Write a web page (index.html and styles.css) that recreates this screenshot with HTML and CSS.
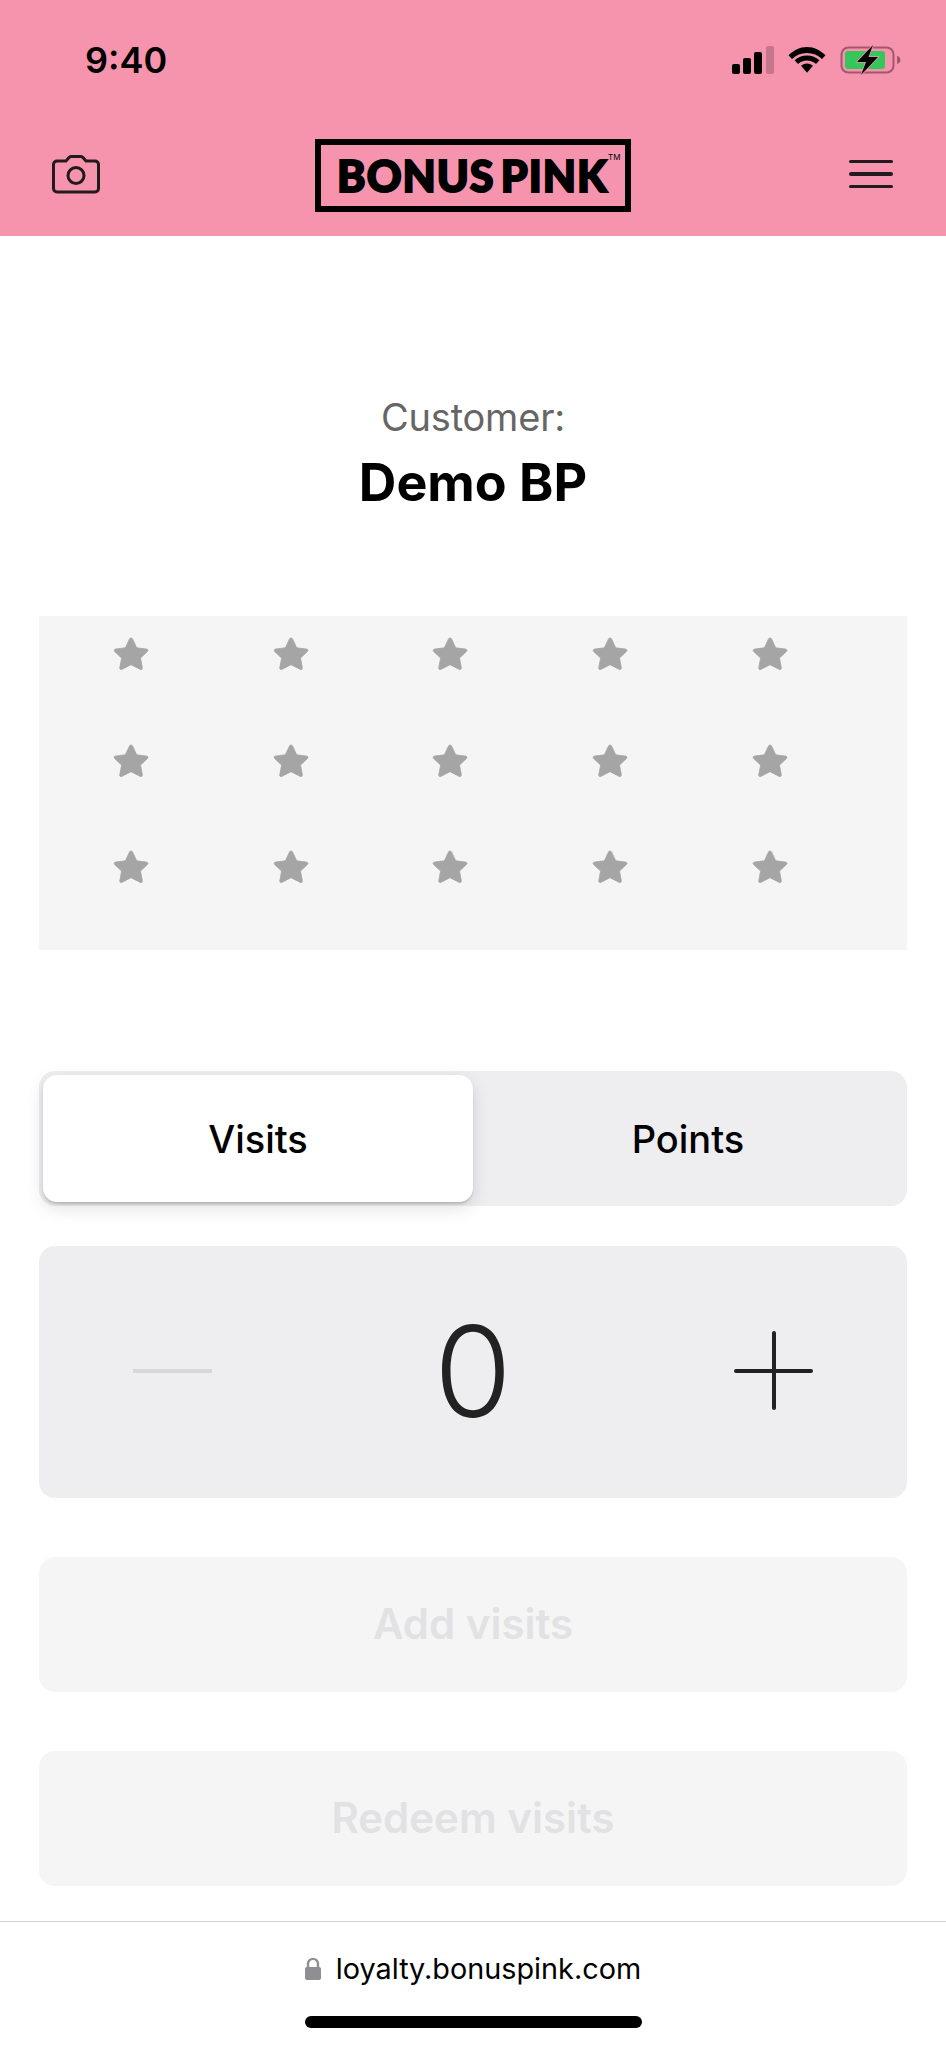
FILE: index.html
```html
<!DOCTYPE html>
<html lang="en">
<head>
    <meta charset="UTF-8">
    <meta name="viewport" content="width=device-width, initial-scale=1.0">
    <title>Bonus Pink Loyalty</title>
    <link rel="stylesheet" href="styles.css">
</head>
<body>

<svg class="sprite" width="0" height="0">
    <symbol id="star" viewBox="0 0 36 34">
        <path d="M18 1c.9 0 1.400.6 1.800 1.400l3.900 8.400 9.500 1.200c1.800.2 2.300 1.500 1.200 2.600l-6.900 6.500 1.800 9.500c.3 1.700-.8 2.500-2.300 1.700L18 27.700l-8.900 4.600c-1.500.8-2.600 0-2.300-1.700l1.800-9.500-6.900-6.500c-1.100-1.100-.6-2.400 1.200-2.600l9.500-1.200 3.900-8.400C16.600 1.600 17.100 1 18 1z"/>
    </symbol>
</svg>

<div class="header">
    <div class="status-bar">
        <span class="time">9:40</span>
        <div class="status-icons">
            <svg class="signal" viewBox="0 0 42 28" width="42" height="28">
                <rect x="0" y="18" width="8" height="10" rx="2"/>
                <rect x="11" y="12" width="8" height="16" rx="2"/>
                <rect x="22" y="6" width="8" height="22" rx="2"/>
                <rect x="34" y="0" width="8" height="28" rx="2" opacity="0.2"/>
            </svg>
            <svg class="wifi" viewBox="0 0 40 28" width="40" height="28">
                <path d="M20 7c6 0 11 2.300 15 6l3.500-3.800C33.500 4.500 27 1 20 1S6.500 4.500 1.500 9.200L5 13c4-3.700 9-6 15-6z"/>
                <path d="M20 14.500c3.600 0 6.600 1.300 9 3.500l3.400-3.700C29 11 24.800 9.500 20 9.500s-9 1.500-12.400 4.800l3.400 3.700c2.400-2.200 5.400-3.500 9-3.500z"/>
                <path d="M20 17.500c-2.500 0-4.500 1-6 2.300l6 7 6-7c-1.500-1.300-3.500-2.300-6-2.300z"/>
            </svg>
            <svg class="battery" viewBox="0 0 62 30" width="62" height="30">
                <rect x="1.500" y="2.500" width="52" height="25" rx="7" fill="none" stroke="#a3566f" stroke-width="2"/>
                <rect x="5" y="6" width="40" height="18" rx="3" fill="#34c759"/>
                <path d="M57 11c2.500.6 3.500 2.200 3.500 4s-1 3.400-3.500 4z" fill="#a3566f"/>
                <path d="M33 0L17 17h9l-5 13 17-18h-9.500z" stroke="#f694ae" stroke-width="1.500" paint-order="stroke"/>
            </svg>
        </div>
    </div>
    <div class="nav">
        <svg class="camera" viewBox="0 0 48 40" width="48" height="40" fill="none" stroke="#231a1e" stroke-width="3">
            <path d="M5 7h9l3-3.500c.6-.7 1.300-1 2-1h10c.7 0 1.400.3 2 1l3 3.500h9c2 0 3.500 1.500 3.500 3.500v24c0 2-1.500 3.500-3.500 3.500H5c-2 0-3.500-1.500-3.500-3.500v-24C1.500 8.500 3 7 5 7z"/>
            <circle cx="24" cy="21.500" r="8"/>
        </svg>
        <div class="logo">
            <span class="logo-text">BONUS PINK</span>
            <span class="logo-tm">TM</span>
        </div>
        <div class="burger">
            <span></span>
            <span></span>
            <span></span>
        </div>
    </div>
</div>

<div class="content">
    <div class="customer">
        <div class="customer-label">Customer:</div>
        <div class="customer-name">Demo BP</div>
    </div>

    <div class="stars">
        <svg class="star"><use href="#star"/></svg>
        <svg class="star"><use href="#star"/></svg>
        <svg class="star"><use href="#star"/></svg>
        <svg class="star"><use href="#star"/></svg>
        <svg class="star"><use href="#star"/></svg>
        <svg class="star"><use href="#star"/></svg>
        <svg class="star"><use href="#star"/></svg>
        <svg class="star"><use href="#star"/></svg>
        <svg class="star"><use href="#star"/></svg>
        <svg class="star"><use href="#star"/></svg>
        <svg class="star"><use href="#star"/></svg>
        <svg class="star"><use href="#star"/></svg>
        <svg class="star"><use href="#star"/></svg>
        <svg class="star"><use href="#star"/></svg>
        <svg class="star"><use href="#star"/></svg>
    </div>

    <div class="toggle">
        <div class="toggle-item active">Visits</div>
        <div class="toggle-item">Points</div>
    </div>

    <div class="counter">
        <span class="minus"></span>
        <span class="count">0</span>
        <span class="plus"></span>
    </div>

    <button class="action add">Add visits</button>
    <button class="action redeem">Redeem visits</button>
</div>

<div class="browser-bar">
    <div class="url">
        <svg class="lock" viewBox="0 0 16 22" width="16" height="22">
            <path d="M2 22c-1.200 0-2-.8-2-2v-9c0-1.200.7-1.900 1.800-2V6c0-3.800 2.500-6 6.200-6s6.200 2.200 6.200 6v3c1.100.1 1.800.8 1.800 2v9c0 1.200-.8 2-2 2zM4.200 9h7.600V6c0-2.500-1.500-3.900-3.800-3.900S4.200 3.500 4.200 6z"/>
        </svg>
        <span>loyalty.bonuspink.com</span>
    </div>
    <div class="home-bar"></div>
</div>

</body>
</html>
```

FILE: styles.css
```css
html, body {
    margin: 0;
    padding: 0;
}

body {
    width: 946px;
    height: 2048px;
    background-color: #fff;
    font-family: 'Inter', 'Liberation Sans', sans-serif;
    color: #000;
    display: flex;
    flex-direction: column;
    overflow: hidden;
}

.sprite {
    position: absolute;
}

.header {
    height: 236px;
    background-color: #f694ae;
    flex-shrink: 0;
}

.status-bar {
    height: 120px;
    padding: 0 44px 0 85px;
    display: flex;
    justify-content: space-between;
    align-items: center;
}

.time {
    font-size: 36px;
    font-weight: 600;
}

.status-icons {
    display: flex;
    align-items: center;
    gap: 13px;
}

.nav {
    height: 110px;
    padding: 0 53px 0 52px;
    display: grid;
    grid-template-columns: 1fr auto 1fr;
    align-items: center;
}

.camera {
    margin-bottom: 2px;
}

.logo {
    width: 316px;
    height: 73px;
    box-sizing: border-box;
    border: 6px solid #000;
    display: flex;
    align-items: center;
    justify-content: center;
    position: relative;
}

.logo-text {
    font-family: 'Lato', sans-serif;
    font-size: 43px;
    line-height: 1;
    font-weight: 900;
    word-spacing: -5px;
    letter-spacing: 1px;
    -webkit-text-stroke: 2px #000;
}

.logo-tm {
    position: absolute;
    top: 7px;
    right: 4px;
    font-size: 8px;
    line-height: 10px;
}

.burger {
    width: 44px;
    justify-self: end;
    padding-bottom: 2px;
    display: flex;
    flex-direction: column;
    gap: 9px;
}

.burger span {
    height: 3.5px;
    border-radius: 2px;
    background-color: #231a1e;
}

.content {
    flex: 1;
    padding: 0 39px;
    display: flex;
    flex-direction: column;
}

.customer {
    margin-top: 157px;
    text-align: center;
}

.customer-label {
    font-size: 38px;
    line-height: 48px;
    letter-spacing: -0.2px;
    color: #666;
}

.customer-name {
    margin-top: 12px;
    font-size: 52px;
    line-height: 60px;
    font-weight: 700;
}

.stars {
    margin-top: 103px;
    height: 334px;
    box-sizing: border-box;
    padding: 21px 0 0 12px;
    background-color: #f5f5f6;
    display: grid;
    grid-template-columns: repeat(5, 159.7px);
    grid-auto-rows: 36px;
    row-gap: 70.5px;
    justify-items: center;
}

.star {
    width: 36px;
    height: 34px;
    fill: #a5a5a5;
    stroke: #a5a5a5;
    stroke-width: 0.8px;
    stroke-linejoin: round;
}

.toggle {
    margin-top: 121px;
    height: 135px;
    box-sizing: border-box;
    padding: 4px;
    border-radius: 16px;
    background-color: #eeeef1;
    display: flex;
}

.toggle-item {
    flex: 1;
    display: flex;
    align-items: center;
    justify-content: center;
    font-size: 38px;
    font-weight: 450;
    border-radius: 14px;
}

.toggle-item.active {
    background-color: #fff;
    box-shadow: 0 2px 2px rgba(0, 0, 0, 0.15), 0 6px 18px rgba(0, 0, 0, 0.12);
}

.counter {
    margin-top: 40px;
    height: 252px;
    box-sizing: border-box;
    padding: 0 94px 3px;
    border-radius: 16px;
    background-color: #eeeef1;
    display: flex;
    align-items: center;
    justify-content: space-between;
}

.minus {
    width: 79px;
    height: 4px;
    background-color: #d8d8dc;
}

.count {
    font-size: 126px;
    font-weight: 350;
    line-height: 1;
    color: #222;
}

.plus {
    width: 79px;
    height: 79px;
    position: relative;
}

.plus::before,
.plus::after {
    content: '';
    position: absolute;
    border-radius: 2px;
    background-color: #222;
}

.plus::before {
    left: 0;
    right: 0;
    top: 38px;
    height: 4px;
}

.plus::after {
    top: 0;
    bottom: 0;
    left: 38px;
    width: 4px;
}

.action {
    height: 135px;
    padding: 0 0 3px;
    border: none;
    border-radius: 16px;
    background-color: #f5f5f6;
    color: #e2e2e4;
    font-family: inherit;
    font-size: 42px;
    font-weight: 600;
}

.action.add {
    margin-top: 59px;
}

.action.redeem {
    margin-top: 59px;
}

.browser-bar {
    height: 126px;
    flex-shrink: 0;
    border-top: 1px solid #d2d2d2;
    display: flex;
    flex-direction: column;
    align-items: center;
}

.url {
    margin-top: 29px;
    display: flex;
    align-items: center;
    gap: 15px;
    font-size: 28.8px;
    line-height: 36px;
}

.lock {
    fill: #8e8e93;
}

.home-bar {
    margin-top: 29px;
    width: 337px;
    height: 12px;
    border-radius: 6px;
    background-color: #000;
}
```
